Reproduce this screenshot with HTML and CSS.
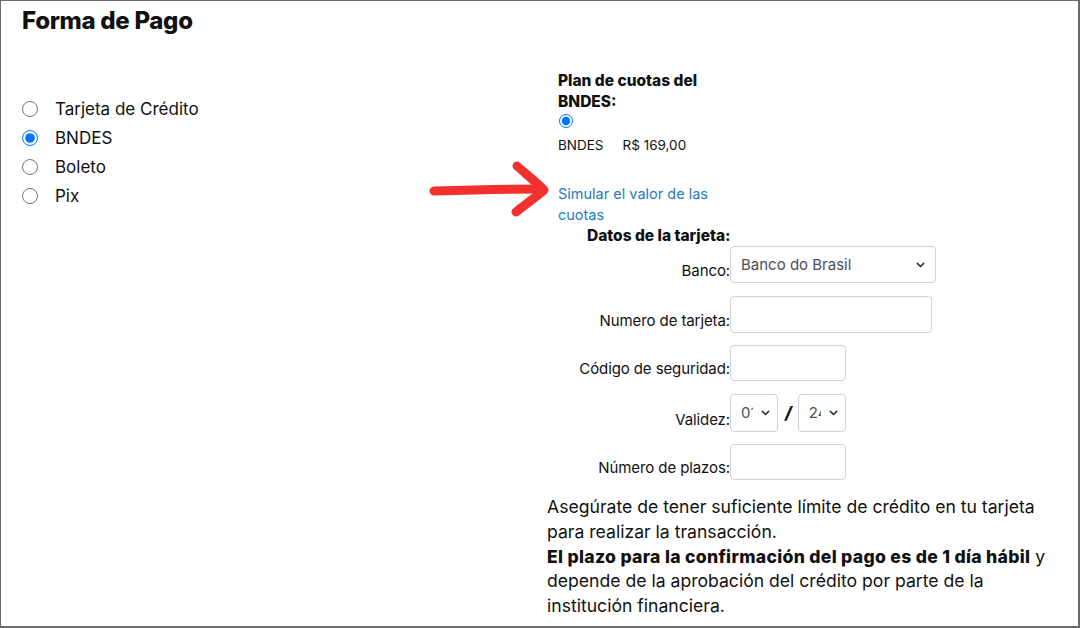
FILE: index.html
```html
<!DOCTYPE html>
<html lang="es">
<head>
<meta charset="utf-8">
<title>Forma de Pago</title>
<link rel="stylesheet" href="styles.css">
</head>
<body>
<div class="frame">
  <h1 class="title">Forma de Pago</h1>
  <div class="cols">
    <ul class="methods">
      <li><label class="method"><input type="radio" name="m"><span>Tarjeta de Crédito</span></label></li>
      <li><label class="method"><input type="radio" name="m" checked><span>BNDES</span></label></li>
      <li><label class="method"><input type="radio" name="m"><span>Boleto</span></label></li>
      <li><label class="method"><input type="radio" name="m"><span>Pix</span></label></li>
    </ul>
    <div class="detail">
      <div class="plan">
        <h3 class="plan-title">Plan de cuotas del BNDES:</h3>
        <input class="plan-radio" type="radio" name="p" checked>
        <div class="plan-row"><span>BNDES</span><span>R$ 169,00</span></div>
        <a class="simulate" href="#">Simular el valor de las cuotas</a>
      </div>
      <h4 class="card-title">Datos de la tarjeta:</h4>
      <div class="card-form">
        <label class="field-label">Banco:</label>
        <div class="select sel-bank"><span class="sel-text">Banco do Brasil</span><svg class="chev" viewBox="0 0 10 6"><path d="M1.5 1.2l3.5 3.5 3.5-3.5" fill="none" stroke="#333" stroke-width="1.8" stroke-linecap="round" stroke-linejoin="round"/></svg></div>

        <label class="field-label">Numero de tarjeta:</label>
        <div class="input in-wide"></div>

        <label class="field-label">Código de seguridad:</label>
        <div class="input in-short"></div>

        <label class="field-label">Validez:</label>
        <div class="validez">
          <div class="select sel-small"><span class="sel-text clip">01</span><svg class="chev" viewBox="0 0 10 6"><path d="M1.5 1.2l3.5 3.5 3.5-3.5" fill="none" stroke="#333" stroke-width="1.8" stroke-linecap="round" stroke-linejoin="round"/></svg></div>
          <span class="slash">/</span>
          <div class="select sel-small"><span class="sel-text clip">24</span><svg class="chev" viewBox="0 0 10 6"><path d="M1.5 1.2l3.5 3.5 3.5-3.5" fill="none" stroke="#333" stroke-width="1.8" stroke-linecap="round" stroke-linejoin="round"/></svg></div>
        </div>

        <label class="field-label">Número de plazos:</label>
        <div class="input in-short2"></div>
      </div>
      <p class="note">Asegúrate de tener suficiente límite de crédito en tu tarjeta para realizar la transacción.<br><strong>El plazo para la confirmación del pago es de 1 día hábil</strong> y depende de la aprobación del crédito por parte de la institución financiera.</p>
    </div>
  </div>
  <svg class="arrow" viewBox="0 0 130 65" width="130" height="65">
    <path d="M8 35 C40 34 80 33 116 33" fill="none" stroke="#f2312f" stroke-width="9" stroke-linecap="round"/>
    <path d="M91 10 C100 18 110 26 118 34 C110 41 100 48 90 56" fill="none" stroke="#f2312f" stroke-width="9" stroke-linecap="round" stroke-linejoin="round"/>
  </svg>
</div>
</body>
</html>
```
FILE: styles.css
```css
* { box-sizing: border-box; }
html, body { margin: 0; padding: 0; background: #fff; }
body {
  font-family: Inter, "Liberation Sans", sans-serif;
  color: #111;
}
.frame {
  position: relative;
  width: 1080px;
  height: 628px;
  border: 1px solid #6b6b6b;
  border-right-width: 2px;
  border-bottom-width: 2px;
  overflow: hidden;
}
.title {
  margin: 6px 0 0 21px;
  font-size: 24px;
  line-height: 28px;
  font-weight: 800;
  letter-spacing: -0.3px;
}
.cols {
  display: flex;
  align-items: flex-start;
}
.methods {
  list-style: none;
  margin: 59px 0 0 0;
  padding: 0;
  width: 546px;
}
.method {
  display: flex;
  align-items: center;
  height: 29px;
  font-size: 17px;
}
.method input {
  width: 16px;
  height: 16px;
  margin: 0 17px 0 21px;
}
.detail {
  margin-top: 35px;
  width: 505px;
}
.plan {
  margin-left: 11px;
  width: 165px;
}
.plan-title {
  margin: 0;
  font-size: 15.5px;
  line-height: 21px;
  font-weight: 800;
}
.plan-radio {
  display: block;
  width: 14px;
  height: 14px;
  margin: 2px 0 0 1px;
}
.plan-row {
  display: flex;
  gap: 19px;
  margin-top: 9px;
  font-size: 13.5px;
  line-height: 17px;
}
.simulate {
  display: block;
  margin-top: 29px;
  font-size: 14.5px;
  line-height: 21px;
  color: #1f7bc3;
  text-decoration: none;
}
.card-title {
  margin: 1px 0 0 40px;
  font-size: 15.5px;
  line-height: 20px;
  font-weight: 800;
}
.card-form {
  display: grid;
  grid-template-columns: 183px auto;
  row-gap: 12.5px;
  justify-items: start;
}
.field-label {
  justify-self: end;
  align-self: end;
  padding-bottom: 3px;
  font-size: 15px;
  line-height: 18px;
  letter-spacing: -0.1px;
}
.select, .input {
  border: 1px solid #ced4da;
  border-radius: 4px;
  background: #fff;
}
.select {
  display: flex;
  align-items: center;
  justify-content: space-between;
  color: #495057;
  font-size: 15px;
  padding: 0 10px 0 10px;
}
.sel-bank { width: 206px; height: 37px; }
.in-wide { width: 202px; height: 37px; }
.in-short { width: 116px; height: 36px; }
.in-short2 { width: 116px; height: 36px; }
.validez {
  display: flex;
  align-items: center;
  height: 38px;
}
.sel-small { width: 48px; height: 38px; padding: 0 7px 0 10px; }
.clip {
  display: inline-block;
  width: 12px;
  overflow: hidden;
  white-space: nowrap;
}
.chev { width: 9px; height: 6px; }
.slash {
  margin: 0 6px 0 7px;
  font-weight: 800;
  font-style: italic;
  font-size: 17px;
  color: #111;
}
.note {
  margin: 15px 0 0 0;
  font-size: 17.6px;
  line-height: 24.75px;
}
.note strong { font-weight: 800; letter-spacing: 0.3px; }
.arrow {
  position: absolute;
  left: 425px;
  top: 155px;
}
```
